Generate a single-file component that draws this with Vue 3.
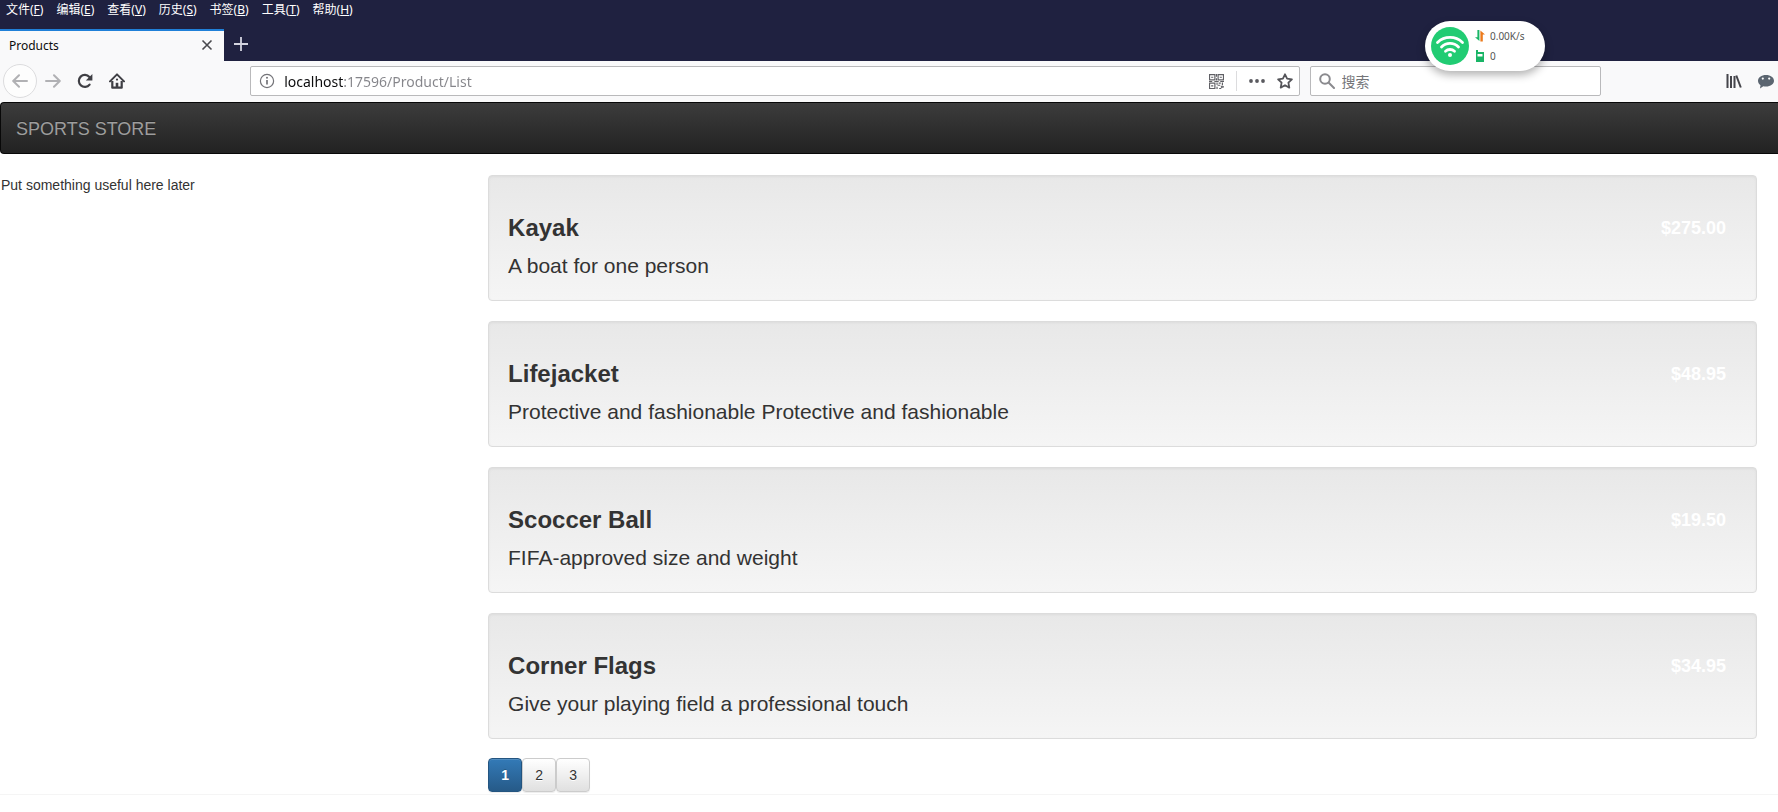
<template>
  <div class="window">
    <header class="titlebar">
      <nav class="menu">
        <a v-for="m in menus" :key="m.key" class="menu-item" href="#">{{ m.name }}(<u>{{ m.key }}</u>)</a>
      </nav>
      <div class="tabs">
        <div class="tab">
          <span class="tab-title">Products</span>
          <button class="tab-close" aria-label="关闭标签页">
            <svg width="12" height="12" viewBox="0 0 12 12"><path d="M1.5 1.5l9 9M10.5 1.5l-9 9" stroke="#4a4a4f" stroke-width="1.6" /></svg>
          </button>
        </div>
        <button class="tab-new" aria-label="新建标签页">
          <svg width="14" height="14" viewBox="0 0 14 14"><path d="M7 0v14M0 7h14" stroke="#d3d4e0" stroke-width="1.8" /></svg>
        </button>
      </div>
    </header>

    <div class="toolbar">
      <div class="nav-buttons">
        <button class="tool back" aria-label="后退">
          <svg width="16" height="16" viewBox="0 0 16 16" fill="none" stroke="#b1b1b4" stroke-width="2" stroke-linecap="round" stroke-linejoin="round"><path d="M15 8H1.5M7 2.2L1.2 8 7 13.8" /></svg>
        </button>
        <button class="tool" aria-label="前进">
          <svg width="16" height="16" viewBox="0 0 16 16" fill="none" stroke="#b1b1b4" stroke-width="2" stroke-linecap="round" stroke-linejoin="round"><path d="M1 8h13.5M9 2.2L14.8 8 9 13.8" /></svg>
        </button>
        <button class="tool" aria-label="刷新">
          <svg width="16" height="16" viewBox="0 0 16 16"><path d="M12.6 11.6A6 6 0 1 1 12.4 4" fill="none" stroke="#3f3f44" stroke-width="2.2" stroke-linecap="round" /><path d="M15.4 1v6.6H8.8z" fill="#3f3f44" /></svg>
        </button>
        <button class="tool" aria-label="主页">
          <svg width="16" height="16" viewBox="0 0 16 16"><path d="M1 8.4L8 1.4l7 7" fill="none" stroke="#3f3f44" stroke-width="2" stroke-linecap="round" stroke-linejoin="round" /><path d="M3.3 8v6.7h9.4V8" fill="none" stroke="#3f3f44" stroke-width="2.2" stroke-linejoin="round" /><path d="M6.7 15V9.8h2.6V15z" fill="#3f3f44" /><circle cx="8" cy="6.6" r="1.1" fill="#3f3f44" /></svg>
        </button>
      </div>
      <div class="spacer"></div>
      <div class="field url">
        <svg width="16" height="16" viewBox="0 0 16 16"><circle cx="8" cy="8" r="6.6" fill="none" stroke="#737378" stroke-width="1.2" /><path d="M8 7v4.4" stroke="#737378" stroke-width="1.7" /><circle cx="8" cy="4.8" r="1" fill="#737378" /></svg>
        <input v-model="url" class="url-input" type="text" aria-label="网址" />
        <button class="field-btn" aria-label="二维码">
          <svg width="15" height="15" viewBox="0 0 14 14" fill="none" stroke="#606065" stroke-width="1.1">
            <path d="M.5 .5h5v5h-5zM8.5 .5h5v5h-5zM.5 8.5h5v5h-5z" />
            <path d="M2 3h2M10 3h2M2 11h2M0 7h3M5 7h4M10.5 7H14M7 0v2.5M7 4v2M7.5 8v2M8 10.5h2.5M9 8.5h2M12.5 8v2.5M7.5 12v2M9.5 13.5h2M11 12h3M12 11v2" />
          </svg>
        </button>
        <span class="field-sep"></span>
        <button class="field-btn dots" aria-label="页面操作">
          <svg width="16" height="4" viewBox="0 0 16 4" fill="#5a5a5f"><circle cx="2" cy="2" r="1.9" /><circle cx="8" cy="2" r="1.9" /><circle cx="14" cy="2" r="1.9" /></svg>
        </button>
        <button class="field-btn" aria-label="添加书签">
          <svg width="16" height="16" viewBox="0 0 16 16"><path d="M8 1.3l2.1 4.4 4.8.6-3.5 3.4.9 4.9L8 12.2l-4.3 2.4.9-4.9L1.100 6.3l4.8-.6z" fill="none" stroke="#55555a" stroke-width="1.8" stroke-linejoin="round" /></svg>
        </button>
      </div>
      <label class="field search">
        <svg width="16" height="16" viewBox="0 0 16 16" fill="none" stroke="#8a8a8e" stroke-width="2" stroke-linecap="round"><circle cx="6" cy="6" r="4.8" /><path d="M9.8 9.8L15 15" /></svg>
        <input v-model="query" class="search-input" type="text" placeholder="搜索" aria-label="搜索" />
      </label>
      <div class="spacer"></div>
      <div class="extras">
        <button class="extra" aria-label="书架">
          <svg width="16" height="14" viewBox="0 0 16 14" stroke="#45454a" stroke-width="2"><path d="M1.5 0v14M5 2v12M8.5 2v12" /><path d="M10.3 1.5L14.8 13.5" /></svg>
        </button>
        <button class="extra" aria-label="聊天">
          <svg width="18" height="15" viewBox="0 0 18 15"><path d="M9 1c4.6 0 8 2.6 8 5.8S13.6 12.6 9 12.6c-1 0-1.9-.1-2.7-.3L3 14.4l.5-3.2C1.9 10.1 1 8.6 1 6.8 1 3.6 4.4 1 9 1z" fill="#5b6570" /><circle cx="5.8" cy="4.6" r="1.1" fill="#fff" /><circle cx="12.2" cy="4.6" r="1.1" fill="#fff" /></svg>
        </button>
      </div>
    </div>

    <div class="net-widget">
      <svg width="38" height="38" viewBox="0 0 38 38">
        <circle cx="19" cy="19" r="19" fill="#21cc73" />
        <g fill="none" stroke="#fff" stroke-width="2.8" stroke-linecap="round">
          <path d="M6.5 15.5a18 18 0 0 1 25 0" />
          <path d="M10.5 20a12 12 0 0 1 17 0" />
          <path d="M14.5 24.3a6.5 6.5 0 0 1 9 0" />
        </g>
        <circle cx="19" cy="28" r="2" fill="#fff" />
      </svg>
      <div class="net-stats">
        <div class="net-row">
          <svg width="10" height="12" viewBox="0 0 10 12"><path d="M2.4 0h2v11L0 7.2h2.4z" fill="#19b566" /><path d="M5.4 11.5V.5L10 4.5H7.8v7z" fill="#ec7a1c" /></svg>
          <span>0.00K/s</span>
        </div>
        <div class="net-row">
          <svg width="10" height="12" viewBox="0 0 10 12"><path d="M1 0h2v2h6v10H1z" fill="#19b566" /><path d="M2.5 4h5v2.5h-5z" fill="#fff" /></svg>
          <span>0</span>
        </div>
      </div>
    </div>

    <div class="page">
      <nav class="navbar">
        <a class="brand" href="#">SPORTS STORE</a>
      </nav>
      <div class="row">
        <aside class="categories">Put something useful here later</aside>
        <main class="products">
          <article v-for="p in products" :key="p.name" class="well">
            <h3 class="well-head">
              <strong>{{ p.name }}</strong>
              <span class="price">{{ p.price }}</span>
            </h3>
            <p class="lead">{{ p.description }}</p>
          </article>
          <div class="pager">
            <a v-for="n in 3" :key="n" href="#" :class="['btn', { selected: n === page }]" @click.prevent="page = n">{{ n }}</a>
          </div>
        </main>
      </div>
      <div class="page-end"></div>
    </div>
  </div>
</template>

<script setup>
import { ref } from 'vue';

const menus = [
  { name: '文件', key: 'F' },
  { name: '编辑', key: 'E' },
  { name: '查看', key: 'V' },
  { name: '历史', key: 'S' },
  { name: '书签', key: 'B' },
  { name: '工具', key: 'T' },
  { name: '帮助', key: 'H' },
];

const products = [
  { name: 'Kayak', price: '$275.00', description: 'A boat for one person' },
  { name: 'Lifejacket', price: '$48.95', description: 'Protective and fashionable Protective and fashionable' },
  { name: 'Scoccer Ball', price: '$19.50', description: 'FIFA-approved size and weight' },
  { name: 'Corner Flags', price: '$34.95', description: 'Give your playing field a professional touch' },
];

const url = ref('localhost:17596/Product/List');
const query = ref('');
const page = ref(1);
</script>

<style>
body {
  margin: 0;
  background: #ffffff;
}
</style>

<style scoped>
.window {
  position: relative;
  overflow-x: hidden;
  font-family: "Noto Sans", "Noto Sans CJK SC", sans-serif;
  font-size: 12px;
}

.window * {
  box-sizing: border-box;
}

button {
  display: flex;
  align-items: center;
  justify-content: center;
  padding: 0;
  border: none;
  background: transparent;
  cursor: pointer;
}

a {
  text-decoration: none;
}

.titlebar {
  background: #1f2140;
}

.menu {
  display: flex;
  gap: 13px;
  height: 29px;
  padding-left: 6px;
}

.menu-item {
  color: #ffffff;
  line-height: 20px;
  white-space: nowrap;
}

.tabs {
  display: flex;
  height: 32px;
}

.tab {
  display: flex;
  align-items: center;
  justify-content: space-between;
  width: 224px;
  padding: 0 10px 2px 9px;
  border-top: 2px solid #2080d8;
  background: #f9f9fa;
  color: #0c0c0d;
}

.tab-close {
  width: 14px;
  height: 14px;
}

.tab-new {
  width: 34px;
  padding-bottom: 2px;
}

.toolbar {
  display: flex;
  align-items: center;
  height: 41px;
  padding-bottom: 1px;
  background: #f9f9fa;
}

.nav-buttons {
  display: flex;
  align-items: center;
  padding-left: 3px;
}

.tool {
  width: 32px;
  height: 34px;
}

.back {
  width: 34px;
  border: 1px solid #dcdcde;
  border-radius: 50%;
  background: #fdfdfd;
}

.spacer {
  flex: 117;
}

.field {
  display: flex;
  align-items: center;
  height: 30px;
  padding: 0 8px;
  border: 1px solid #b9b9bb;
  border-radius: 2px;
  background: #ffffff;
}

.field input {
  flex: 1;
  min-width: 0;
  padding: 0;
  border: none;
  outline: none;
  background: transparent;
  font-family: inherit;
}

.url {
  flex: 1032;
  padding-right: 6px;
  margin-right: 10px;
}

/* host part is drawn darker than the path */
.field .url-input {
  margin-left: 9px;
  color: #0c0c0d;
  font-size: 14px;
  background: linear-gradient(90deg, #0c0c0d 60px, #85858a 60px);
  background-clip: text;
  -webkit-background-clip: text;
  -webkit-text-fill-color: transparent;
}

.field-sep {
  width: 1px;
  height: 20px;
  margin: 0 12px;
  background: #dcdcde;
}

.dots {
  margin-right: 12px;
}

.search {
  flex: 273;
}

.search-input {
  margin-left: 7px;
  color: #0c0c0d;
  font-size: 14px;
}

.search-input::placeholder {
  color: #757579;
  opacity: 1;
}

.extras {
  display: flex;
  gap: 15px;
  padding: 0 3px 0 8px;
}

.net-widget {
  position: absolute;
  top: 21px;
  right: 233px;
  display: flex;
  align-items: center;
  gap: 6px;
  width: 120px;
  height: 50px;
  padding: 0 6px;
  border-radius: 25px;
  background: #ffffff;
  box-shadow: 0 4px 8px rgba(0, 0, 0, 0.3);
  color: #555555;
  font-size: 10px;
}

.net-row {
  display: flex;
  align-items: center;
  gap: 5px;
  line-height: 20px;
}

.page {
  color: #333333;
  font-family: "Liberation Sans", Arial, sans-serif;
  font-size: 14px;
  line-height: 20px;
}

.navbar {
  display: flex;
  align-items: center;
  height: 52px;
  margin-bottom: 21px;
  padding: 2px 0 0 15px;
  border: 1px solid #080808;
  border-right: none;
  border-radius: 4px 0 0 4px;
  background: linear-gradient(#3c3c3c, #222222);
}

.brand {
  color: #9d9d9d;
  font-size: 18px;
  text-shadow: 0 -1px 0 rgba(0, 0, 0, 0.25);
}

.row {
  display: grid;
  grid-template-columns: 5fr 13fr;
  padding-right: 21px;
}

.categories {
  padding-left: 1px;
}

.well {
  margin-bottom: 20px;
  padding: 19px;
  border: 1px solid #dcdcdc;
  border-radius: 4px;
  background: linear-gradient(#e8e8e8, #f5f5f5);
  box-shadow: inset 0 1px 3px rgba(0, 0, 0, 0.05), 0 1px 0 rgba(255, 255, 255, 0.1);
}

.well:last-of-type {
  margin-bottom: 19px;
}

.well-head {
  display: flex;
  align-items: center;
  justify-content: space-between;
  margin: 20px 0 10px;
  font-size: 24px;
  line-height: 26px;
}

.price {
  padding: 0 11px;
  color: #ffffff;
  font-size: 18px;
}

.lead {
  margin: 0;
  font-size: 21px;
  line-height: 30px;
}

.pager {
  display: flex;
}

.btn {
  width: 34px;
  height: 34px;
  border: 1px solid #cccccc;
  border-radius: 4px;
  background: linear-gradient(#ffffff, #e0e0e0);
  box-shadow: inset 0 1px 0 rgba(255, 255, 255, 0.15), 0 1px 1px rgba(0, 0, 0, 0.075);
  color: #333333;
  line-height: 32px;
  text-align: center;
  text-shadow: 0 1px 0 #ffffff;
}

.btn.selected {
  border-color: #245580;
  background: linear-gradient(#337ab7, #265a88);
  color: #ffffff;
  font-weight: 700;
  text-shadow: 0 -1px 0 rgba(0, 0, 0, 0.2);
}

.page-end {
  margin-top: 2px;
  border-top: 1px solid #f5f5f5;
}
</style>
